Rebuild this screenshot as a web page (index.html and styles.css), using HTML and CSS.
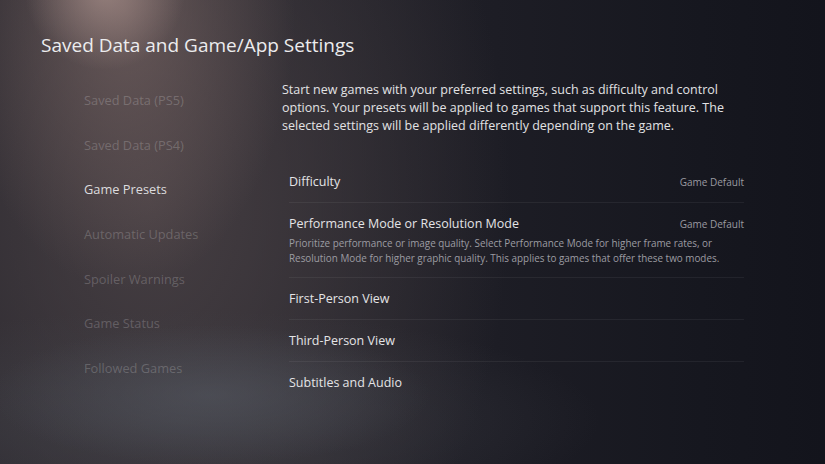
FILE: index.html
```html
<!DOCTYPE html>
<html lang="en">
<head>
    <meta charset="UTF-8">
    <meta name="viewport" content="width=device-width, initial-scale=1.0">
    <title>Saved Data and Game/App Settings</title>
    <link rel="stylesheet" href="styles.css">
</head>
<body>
    <div class="screen">
        <h1 class="title">Saved Data and Game/App Settings</h1>

        <div class="content">
            <!-- Menu lateral -->
            <ul class="side-menu">
                <li>Saved Data (PS5)</li>
                <li>Saved Data (PS4)</li>
                <li class="active">Game Presets</li>
                <li>Automatic Updates</li>
                <li>Spoiler Warnings</li>
                <li>Game Status</li>
                <li>Followed Games</li>
            </ul>

            <!-- Panel de ajustes -->
            <div class="panel">
                <p class="intro">Start new games with your preferred settings, such as difficulty and control options. Your presets will be applied to games that support this feature. The selected settings will be applied differently depending on the game.</p>

                <div class="settings">
                    <div class="row">
                        <div class="row-head">
                            <span class="label">Difficulty</span>
                            <span class="value">Game Default</span>
                        </div>
                    </div>
                    <div class="row with-hint">
                        <div class="row-head">
                            <span class="label">Performance Mode or Resolution Mode</span>
                            <span class="value">Game Default</span>
                        </div>
                        <p class="hint">Prioritize performance or image quality. Select Performance Mode for higher frame rates, or Resolution Mode for higher graphic quality. This applies to games that offer these two modes.</p>
                    </div>
                    <div class="row">
                        <div class="row-head">
                            <span class="label">First-Person View</span>
                        </div>
                    </div>
                    <div class="row">
                        <div class="row-head">
                            <span class="label">Third-Person View</span>
                        </div>
                    </div>
                    <div class="row last">
                        <div class="row-head">
                            <span class="label">Subtitles and Audio</span>
                        </div>
                    </div>
                </div>
            </div>
        </div>
    </div>
</body>
</html>
```

FILE: styles.css
```css
html, body {
    margin: 0;
    height: 100%;
}

body {
    font-family: 'Open Sans', 'Noto Sans', sans-serif;
    color: #e6e6e8;
    overflow: hidden;
    background-color: #16171f;
    background-image:
        radial-gradient(ellipse 80px 80px at 105px -10px, rgba(170, 145, 140, 0.7), rgba(170, 145, 140, 0) 100%),
        radial-gradient(ellipse 170px 280px at 125px 10px, rgba(125, 105, 103, 0.65), rgba(125, 105, 103, 0) 100%),
        radial-gradient(ellipse 220px 70px at 210px 395px, rgba(90, 95, 105, 0.45), rgba(90, 95, 105, 0) 100%),
        radial-gradient(ellipse 420px 110px at 180px 420px, rgba(70, 71, 78, 0.55), rgba(70, 71, 78, 0) 100%),
        radial-gradient(ellipse 360px 520px at 150px 200px, rgba(72, 64, 68, 0.95), rgba(72, 64, 68, 0) 100%),
        linear-gradient(90deg, #24232a 0%, #26252c 30%, #1d1d25 60%, #16171f 85%, #13141c 100%);
}

.screen {
    padding: 30px 0 0 41px;
}

.title {
    margin: 0;
    font-size: 19px;
    font-weight: 400;
    line-height: 30px;
    color: #ececee;
}

.content {
    display: flex;
    margin-top: 30px;
}

.side-menu {
    list-style: none;
    margin: 0;
    padding: 0 0 0 43px;
    width: 198px;
}

.side-menu li {
    font-size: 12.8px;
    line-height: 20px;
    height: 44.7px;
    color: rgba(255, 255, 255, 0.2);
}

.side-menu li.active {
    color: #dcdcde;
}

.panel {
    width: 465px;
    margin-top: -9px;
}

.intro {
    margin: 0 0 26px;
    font-size: 12.5px;
    line-height: 18px;
    color: #e2e2e4;
}

.settings {
    padding-left: 7px;
    width: 455px;
}

.row {
    border-bottom: 1px solid rgba(255, 255, 255, 0.06);
    padding: 11px 0 10px;
}

.row.with-hint {
    padding-bottom: 11px;
}

.row.last {
    border-bottom: none;
}

.row-head {
    display: flex;
    justify-content: space-between;
    align-items: baseline;
    line-height: 20px;
}

.label {
    font-size: 12.5px;
    color: #e4e4e6;
}

.value {
    font-size: 10px;
    color: #9a9aa0;
}

.hint {
    margin: 2px 0 0;
    font-size: 9.9px;
    line-height: 15px;
    color: #9c9ca2;
}
```
